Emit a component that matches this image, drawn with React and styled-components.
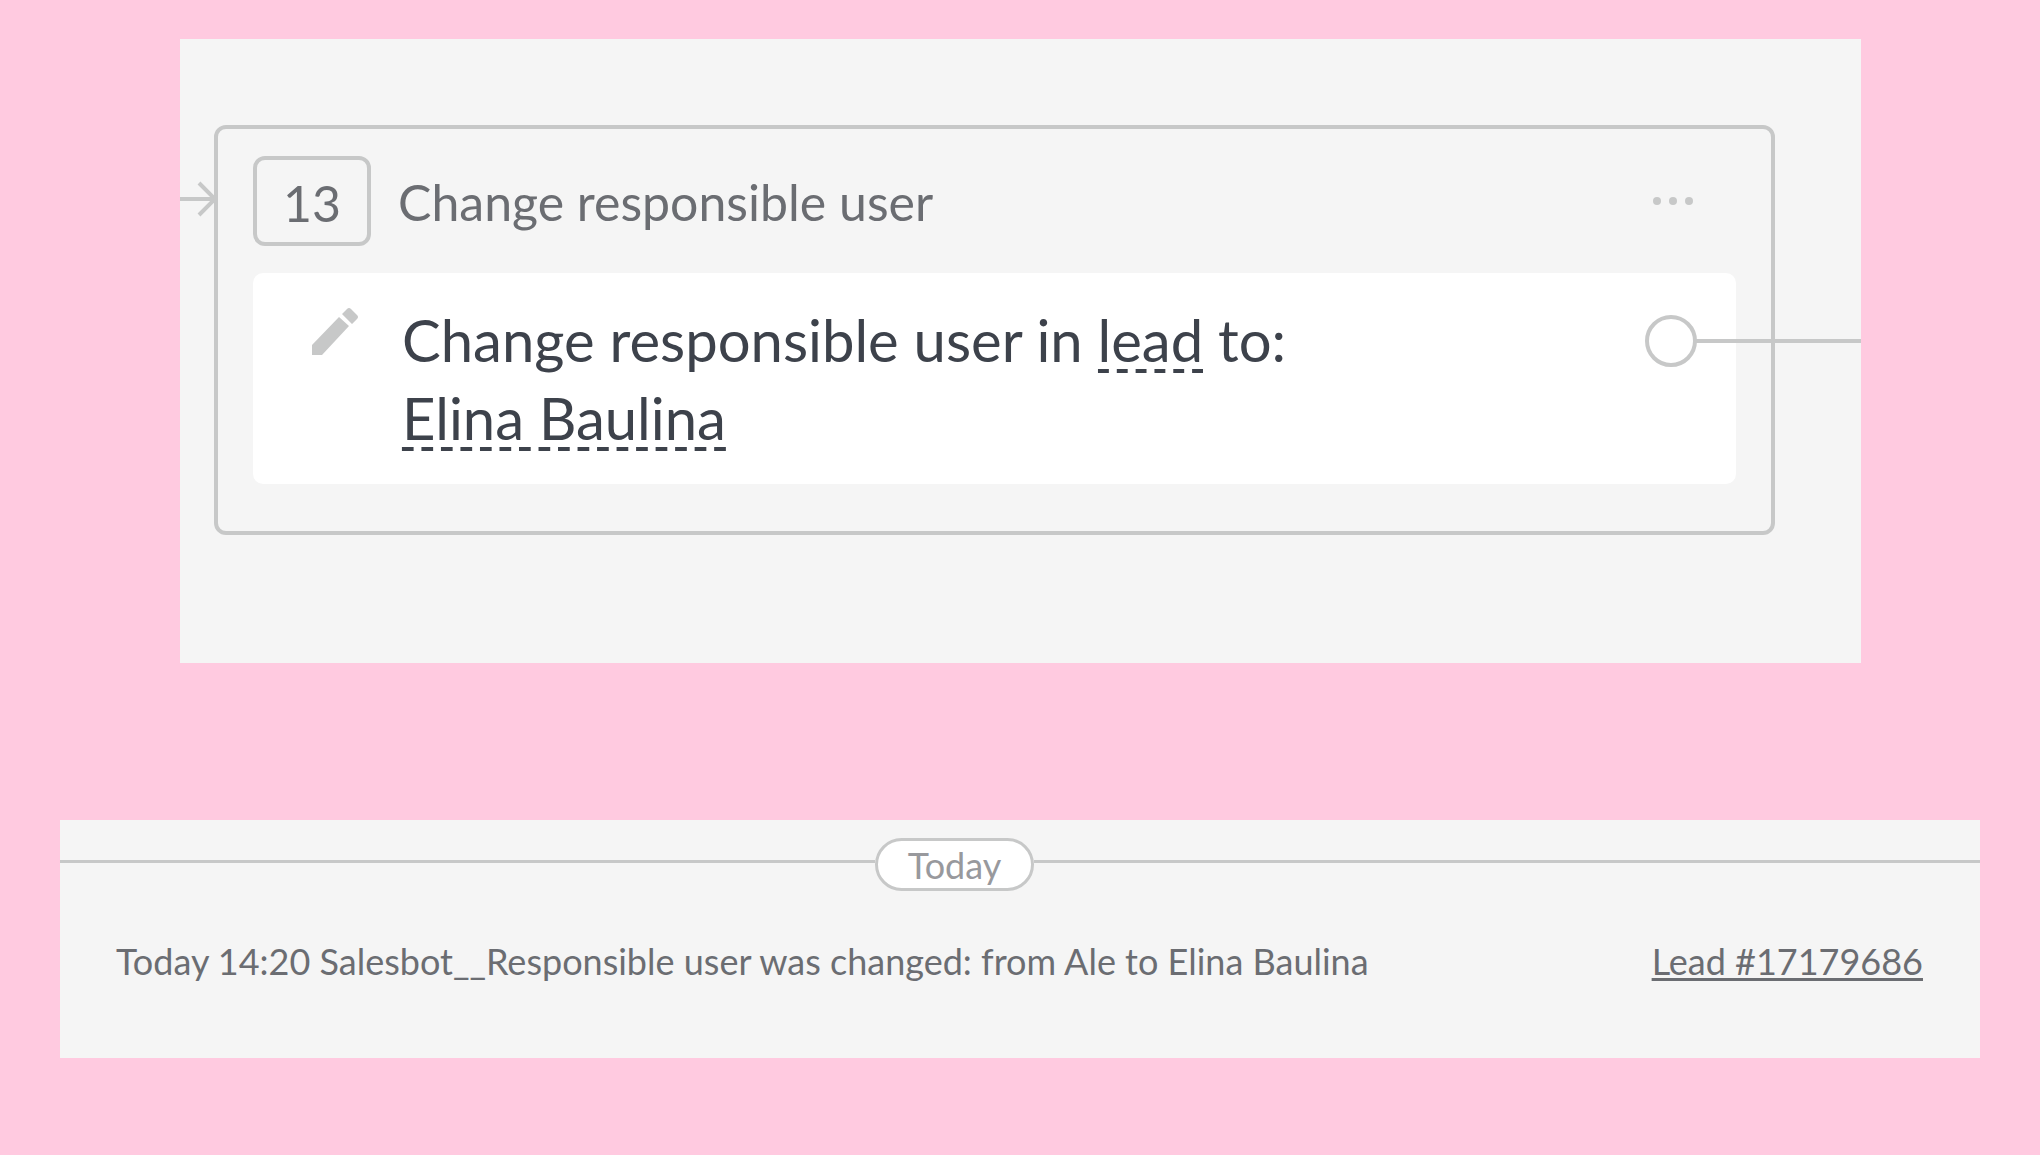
import styled, { createGlobalStyle } from 'styled-components'

const GlobalStyle = createGlobalStyle`
    *{
        box-sizing: border-box;
    }
    body{
        margin: 0;
        background: #ffcae0;
        font-family: Lato, "Noto Sans", sans-serif;
        color: #6b6d72;
    }
    button{
        border: none;
        padding: 0;
        background: none;
        font: inherit;
        color: inherit;
        cursor: pointer;
    }
    svg{
        display: block;
    }
`

const Page = styled.main`
    min-height: 100vh;
    padding: 39px 60px 97px;
    display: flex;
    flex-direction: column;
    gap: 157px;
`

const Canvas = styled.section`
    margin: 0 119px 0 120px;
    padding: 86px 0 128px;
    display: flex;
    align-items: flex-start;
    background: #f5f5f5;
`

const Incoming = styled.svg`
    flex: none;
    margin-top: 56px;
`

const Node = styled.article`
    flex: 1;
    margin-right: 86px;
    padding: 27px 35px 47px;
    border: 4px solid #c7c8c8;
    border-radius: 12px;
`

const NodeHeader = styled.header`
    display: flex;
    align-items: center;
    padding-right: 43px;
    margin-bottom: 27px;
    font-size: 50px;
    line-height: 60px;
`

const Badge = styled.span`
    width: 118px;
    height: 90px;
    margin-right: 27px;
    padding-top: 4px;
    display: flex;
    align-items: center;
    justify-content: center;
    border: 4px solid #c7c8c8;
    border-radius: 12px;
`

const Title = styled.h2`
    flex: 1;
    margin: 0;
    padding-top: 2px;
    font: inherit;
`

const Card = styled.div`
    display: flex;
    align-items: flex-start;
    padding: 28px 39px 27px 56px;
    border-radius: 10px;
    background: white;
`

const EditButton = styled.button`
    margin: 4px 40px 0 0;
`

const Action = styled.p`
    flex: 1;
    margin: 0;
    font-size: 58px;
    line-height: 78px;
    color: #3d424b;
`

// the dash sits in the middle of each tile, so the ends hang 4px outside of the word
const Field = styled.button`
    margin: 0 -4px;
    padding: 0 4px;
    line-height: 66px;
    background: linear-gradient(90deg, transparent 20%, #3d424b 20%, #3d424b 80%, transparent 80%) left bottom / 20px 4px round no-repeat;
`

const Outgoing = styled.button`
    position: relative;
    width: 52px;
    height: 52px;
    margin-top: 14px;
    border: 4px solid #c7c8c8;
    border-radius: 50%;
    &::after{
        content: "";
        position: absolute;
        top: 20px;
        left: 47px;
        width: 165px;
        height: 4px;
        background: #c7c8c8;
    }
`

const Feed = styled.section`
    padding-top: 18px;
    padding-bottom: 73px;
    background: #f5f5f5;
    font-size: 36px;
    line-height: 48px;
`

const DayRow = styled.div`
    display: flex;
    align-items: flex-start;
    margin-bottom: 46px;
`

const Rule = styled.div`
    flex: ${(props) => props.$grow};
    height: 3px;
    margin-top: 22px;
    background: #c7c8c8;
`

const Day = styled.span`
    width: 159px;
    height: 53px;
    display: flex;
    align-items: center;
    justify-content: center;
    border: 3px solid #c7c8c8;
    border-radius: 27px;
    background: white;
    color: #98999d;
`

const Entry = styled.div`
    display: flex;
    justify-content: space-between;
    padding: 0 57px 0 56px;
    p{
        margin: 0;
    }
    a{
        color: inherit;
        text-decoration-thickness: 3px;
        text-underline-offset: 3px;
    }
`

const App = () => {
    return <>
        <GlobalStyle />
        <Page>
            <Canvas>
                <Incoming width="34" height="36" viewBox="0 0 34 36" fill="none" stroke="#c7c8c8" strokeWidth="4">
                    <path d="M0 18H34M19 2l16 16l-16 16" />
                </Incoming>
                <Node>
                    <NodeHeader>
                        <Badge>13</Badge>
                        <Title>Change responsible user</Title>
                        <button aria-label="More">
                            <svg width="40" height="10" viewBox="0 0 40 10" fill="#c7c8c8">
                                <circle cx="4" cy="5" r="4" />
                                <circle cx="20" cy="5" r="4" />
                                <circle cx="36" cy="5" r="4" />
                            </svg>
                        </button>
                    </NodeHeader>
                    <Card>
                        <EditButton aria-label="Edit">
                            <svg width="53" height="53" viewBox="0 0 53 53" fill="#c7c8c8">
                                <path d="M3 40L30 12L40 21L13 50H3zM33 9L38 4Q40 2 42 4L48 10Q50 12 48 14L43 19z" />
                            </svg>
                        </EditButton>
                        <Action>
                            Change responsible user in <Field>lead</Field> to:
                            <br /><Field>Elina Baulina</Field>
                        </Action>
                        <Outgoing aria-label="Next step" />
                    </Card>
                </Node>
            </Canvas>
            <Feed>
                <DayRow>
                    <Rule $grow={815} />
                    <Day>Today</Day>
                    <Rule $grow={946} />
                </DayRow>
                <Entry>
                    <p>Today 14:20 Salesbot__Responsible user was changed: from Ale to Elina Baulina</p>
                    <a href="#17179686">Lead #17179686</a>
                </Entry>
            </Feed>
        </Page>
    </>
}

export default App
